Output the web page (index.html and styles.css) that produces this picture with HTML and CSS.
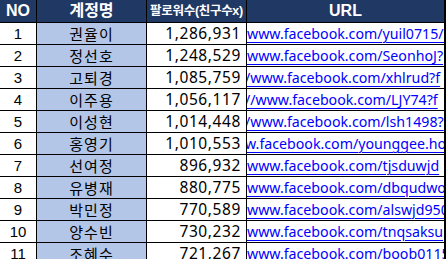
FILE: index.html
```html
<!DOCTYPE html>
<html lang="ko">
<head>
<meta charset="utf-8">
<link rel="stylesheet" href="styles.css">
</head>
<body>
<div class="sheet">
  <div class="cell hd">NO</div>
  <div class="cell hd">계정명</div>
  <div class="cell hd small">팔로워수(친구수x)</div>
  <div class="cell hd">URL</div>

  <div class="cell no">1</div><div class="cell name">권율이</div><div class="cell num">1,286,931</div><div class="cell url"><span>www.facebook.com/yuil0715/?</span></div>
  <div class="cell no">2</div><div class="cell name">정선호</div><div class="cell num">1,248,529</div><div class="cell url"><span>www.facebook.com/SeonhoJ?</span></div>
  <div class="cell no">3</div><div class="cell name">고퇴경</div><div class="cell num">1,085,759</div><div class="cell url"><span class="cut">/www.facebook.com/xhlrud?f</span></div>
  <div class="cell no">4</div><div class="cell name">이주용</div><div class="cell num">1,056,117</div><div class="cell url"><span class="cut">//www.facebook.com/LJY74?f</span></div>
  <div class="cell no">5</div><div class="cell name">이성현</div><div class="cell num">1,014,448</div><div class="cell url"><span class="cut">/www.facebook.com/lsh1498?</span></div>
  <div class="cell no">6</div><div class="cell name">홍영기</div><div class="cell num">1,010,553</div><div class="cell url"><span class="cut2">w.facebook.com/younggee.ho</span></div>
  <div class="cell no">7</div><div class="cell name">선여정</div><div class="cell num">896,932</div><div class="cell url"><span>www.facebook.com/tjsduwjd</span></div>
  <div class="cell no">8</div><div class="cell name">유병재</div><div class="cell num">880,775</div><div class="cell url"><span>www.facebook.com/dbqudwo</span></div>
  <div class="cell no">9</div><div class="cell name">박민정</div><div class="cell num">770,589</div><div class="cell url"><span>www.facebook.com/alswjd950</span></div>
  <div class="cell no">10</div><div class="cell name">양수빈</div><div class="cell num">730,232</div><div class="cell url"><span>www.facebook.com/tnqsaksu</span></div>
  <div class="cell no">11</div><div class="cell name">조혜수</div><div class="cell num">721,267</div><div class="cell url"><span>www.facebook.com/boob0115</span></div>
</div>
</body>
</html>
```

FILE: styles.css
```css
html, body {
  margin: 0;
  padding: 0;
  background: #ffffff;
}
body {
  width: 447px;
  height: 259px;
  overflow: hidden;
}
.sheet {
  display: grid;
  grid-template-columns: 36px 109px 99px 197px;
  grid-template-rows: 22px;
  grid-auto-rows: 21px;
  gap: 1px;
  width: 445px;
  background: #000000;
  border-right: 1px solid #000000;
  font-family: "Noto Sans", "Noto Sans CJK KR", sans-serif;
  font-size: 15px;
  color: #000000;
}
.cell {
  display: flex;
  align-items: center;
  justify-content: center;
  background: #ffffff;
  overflow: hidden;
  white-space: nowrap;
  line-height: 1;
}
.hd {
  background: #1f3864;
  color: #ffffff;
  font-weight: bold;
  font-family: "Liberation Sans", "Noto Sans CJK KR", sans-serif;
  font-size: 16px;
}
.hd.small {
  font-size: 12.5px;
  letter-spacing: -0.3px;
}
.no {
  font-family: "Liberation Sans", sans-serif;
  font-size: 15px;
}
.name {
  background: #b4c6e7;
  font-family: "Noto Sans CJK KR", sans-serif;
  font-size: 15px;
  letter-spacing: 1px;
}
.num {
  justify-content: flex-end;
  padding-right: 5px;
  font-family: "Noto Sans", sans-serif;
  font-size: 15.5px;
  letter-spacing: 0.6px;
}
.url {
  justify-content: flex-start;
  color: #0000ff;
  font-family: "Noto Sans", sans-serif;
  font-size: 14.2px;
}
.url span {
  text-decoration: underline;
  text-underline-offset: 3px;
  padding-top: 1px;
}
.url .cut {
  margin-left: -2px;
}
.url .cut2 {
  margin-left: -2px;
}
```
